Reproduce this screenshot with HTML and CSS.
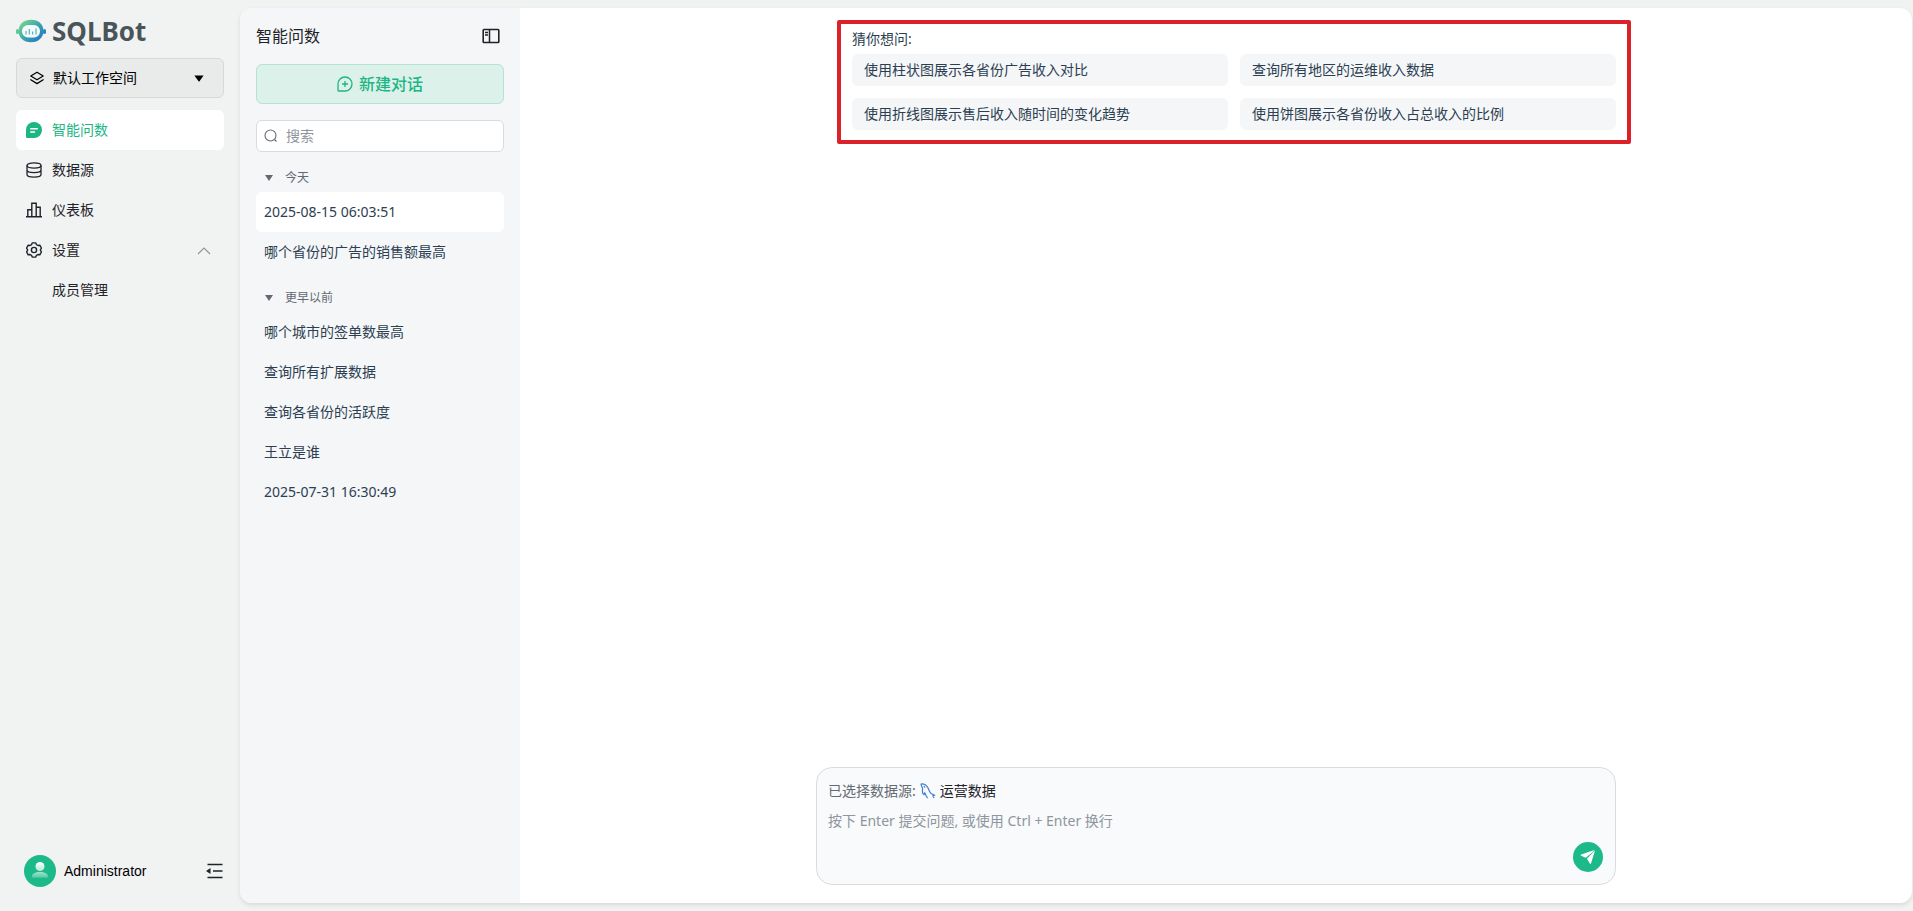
FILE: index.html
```html
<!DOCTYPE html>
<html lang="zh-CN">
<head>
<meta charset="utf-8">
<title>SQLBot</title>
<link rel="stylesheet" href="styles.css">
</head>
<body>
<div class="app">
  <aside class="sidebar">
    <div class="brand">
      <svg class="brand-logo" width="30" height="24" viewBox="0 0 30 24" aria-hidden="true">
        <defs>
          <linearGradient id="logo-fill" x1="0" y1="0" x2="1" y2="1">
            <stop offset="0.1" stop-color="#7ad391"/>
            <stop offset="0.5" stop-color="#3aa8a8"/>
            <stop offset="0.9" stop-color="#2878c4"/>
          </linearGradient>
        </defs>
        <rect x="0" y="10" width="3" height="5" rx="1.500" fill="#62c596"/>
        <rect x="27" y="10" width="3" height="5" rx="1.500" fill="#2e86bb"/>
        <path d="M15 .8c7.500 0 12.400 4.500 12.400 11.200S22.500 23.200 15 23.200 2.600 18.700 2.600 12 7.500.8 15 .8z" fill="url(#logo-fill)"/>
        <rect x="6" y="6" width="18" height="12.500" rx="6" fill="#f2fbfb"/>
        <path d="M10 12v3.500M13.300 10v5.500M16.600 12.500v3M20 9.500v6" stroke="#5fb0b8" stroke-width="1.200" fill="none"/>
      </svg>
      <span class="brand-name">SQLBot</span>
    </div>
    <button class="workspace" type="button">
      <svg width="16" height="16" viewBox="0 0 16 16" fill="none" stroke="currentColor" stroke-width="1.300" stroke-linejoin="round" stroke-linecap="round" aria-hidden="true">
        <path d="M8 2.200 14.200 6 8 9.800 1.800 6zM1.800 9.800 8 13.600l6.200-3.800"/>
      </svg>
      <span class="workspace-name">默认工作空间</span>
      <svg width="10" height="7" viewBox="0 0 10 7" aria-hidden="true"><path d="M.4.4h9.200L5.500 6.300q-.5.500-1 0z" fill="currentColor"/></svg>
    </button>
    <nav class="menu">
      <a class="menu-item active" href="#">
        <svg width="16" height="16" viewBox="0 0 16 16" aria-hidden="true">
          <path d="M8 0a8 8 0 1 1 0 16H1.200A1.200 1.200 0 0 1 0 14.800V8a8 8 0 0 1 8-8z" fill="#1cb584"/>
          <path d="M4.200 6.700h7.600M4.200 9.900h4.800" stroke="#fff" stroke-width="1.500"/>
        </svg>
        <span>智能问数</span>
      </a>
      <a class="menu-item" href="#">
        <svg width="16" height="16" viewBox="0 0 16 16" fill="none" stroke="currentColor" stroke-width="1.300" aria-hidden="true">
          <ellipse cx="8" cy="3.500" rx="7" ry="2.600"/>
          <path d="M1 3.500v9c0 1.500 3.100 2.600 7 2.600s7-1.100 7-2.600v-9M1 8c0 1.500 3.100 2.600 7 2.600S15 9.500 15 8"/>
        </svg>
        <span>数据源</span>
      </a>
      <a class="menu-item" href="#">
        <svg width="16" height="16" viewBox="0 0 16 16" fill="none" stroke="currentColor" stroke-width="1.400" aria-hidden="true">
          <path d="M0 14.700h16M1.800 14.700V7.700h4M5.800 14.700V1.200h4.400v13.500M10.200 5.300h4v9.400"/>
        </svg>
        <span>仪表板</span>
      </a>
      <a class="menu-item" href="#">
        <svg width="16" height="16" viewBox="0 0 16 16" fill="none" stroke="currentColor" stroke-width="1.400" stroke-linejoin="round" aria-hidden="true">
          <path d="M6.200.9h3.600l.7 1.800 1.400.8 1.900-.3 1.700 3-1.100 1.500v.6l1.100 1.500-1.700 3-1.900-.3-1.400.8-.7 1.800H6.200l-.7-1.800-1.400-.8-1.900.3-1.700-3 1.100-1.500v-.6L.5 6.200l1.700-3 1.900.3 1.400-.8z"/>
          <circle cx="8" cy="8" r="2.600"/>
        </svg>
        <span class="menu-label">设置</span>
        <svg width="14" height="10" viewBox="0 0 14 10" fill="none" stroke="#8f959e" stroke-width="1.200" aria-hidden="true"><path d="M1 9l6-6 6 6"/></svg>
      </a>
      <a class="menu-item sub" href="#">成员管理</a>
    </nav>
    <footer class="user">
      <svg width="32" height="32" viewBox="0 0 32 32" aria-hidden="true">
        <defs>
          <linearGradient id="body-fill" x1="0" y1="0" x2="0" y2="1">
            <stop offset="0" stop-color="#a4e4cf"/>
            <stop offset="1" stop-color="#4fc9a2"/>
          </linearGradient>
          <linearGradient id="head-fill" x1="0" y1="0" x2="0" y2="1">
            <stop offset="0" stop-color="#fff"/>
            <stop offset="1" stop-color="#b3e9d7"/>
          </linearGradient>
        </defs>
        <circle cx="16" cy="16" r="16" fill="#1cba8a"/>
        <path d="M8 21.500c0-3 3.500-4.500 8-4.500s8 1.500 8 4.500a1.300 1.300 0 0 1-1.300 1.300H9.300A1.300 1.300 0 0 1 8 21.500z" fill="url(#body-fill)"/>
        <circle cx="16" cy="11.500" r="4.500" fill="url(#head-fill)"/>
      </svg>
      <span class="user-name">Administrator</span>
      <button class="icon-button" type="button" aria-label="收起菜单">
        <svg width="18" height="16" viewBox="0 0 18 16" aria-hidden="true">
          <path d="M1.500 1.500h15M7 8h9.500M1.500 14.500h15" stroke="currentColor" stroke-width="1.600"/>
          <path d="M4.500 5v6L0 8z" fill="currentColor"/>
        </svg>
      </button>
    </footer>
  </aside>

  <div class="panel">
    <section class="history">
      <header class="history-head">
        <h1 class="history-title">智能问数</h1>
        <button class="icon-button" type="button" aria-label="收起会话列表">
          <svg width="18" height="16" viewBox="0 0 18 16" fill="none" stroke="currentColor" aria-hidden="true">
            <rect x="1.200" y="1.500" width="15.600" height="13" rx=".8" stroke-width="1.600"/>
            <path d="M7.500 1.500v13" stroke-width="1.500"/>
            <path d="M3 4.500h3M3 7h3" stroke-width="1.400"/>
          </svg>
        </button>
      </header>
      <button class="new-chat" type="button">
        <svg width="16" height="16" viewBox="0 0 16 16" fill="none" stroke="currentColor" stroke-width="1.300" aria-hidden="true">
          <path d="M8 1a7 7 0 1 1 0 14H1.500a.5.500 0 0 1-.5-.5V8a7 7 0 0 1 7-7zM8 5v6M5 8h6"/>
        </svg>
        <span>新建对话</span>
      </button>
      <label class="search">
        <svg width="14" height="14" viewBox="0 0 14 14" fill="none" stroke="#646a73" stroke-width="1.100" aria-hidden="true">
          <circle cx="6.500" cy="6.500" r="5.500"/><path d="M10.500 10.500l2 2"/>
        </svg>
        <input class="search-input" type="text" placeholder="搜索" aria-label="搜索">
      </label>
      <h2 class="group"><svg width="8" height="6" viewBox="0 0 8 6" aria-hidden="true"><path d="M0 0h8L4 6z" fill="currentColor"/></svg>今天</h2>
      <a class="chat active" href="#">2025-08-15 06:03:51</a>
      <a class="chat" href="#">哪个省份的广告的销售额最高</a>
      <h2 class="group"><svg width="8" height="6" viewBox="0 0 8 6" aria-hidden="true"><path d="M0 0h8L4 6z" fill="currentColor"/></svg>更早以前</h2>
      <a class="chat" href="#">哪个城市的签单数最高</a>
      <a class="chat" href="#">查询所有扩展数据</a>
      <a class="chat" href="#">查询各省份的活跃度</a>
      <a class="chat" href="#">王立是谁</a>
      <a class="chat" href="#">2025-07-31 16:30:49</a>
    </section>

    <main class="conversation">
      <section class="suggest">
        <p class="suggest-title">猜你想问:</p>
        <div class="suggest-grid">
          <button class="chip" type="button">使用柱状图展示各省份广告收入对比</button>
          <button class="chip" type="button">查询所有地区的运维收入数据</button>
          <button class="chip" type="button">使用折线图展示售后收入随时间的变化趋势</button>
          <button class="chip" type="button">使用饼图展示各省份收入占总收入的比例</button>
        </div>
      </section>
      <form class="composer">
        <div class="source">
          <span class="source-label">已选择数据源:</span>
          <svg width="16" height="16" viewBox="0 0 16 16" fill="none" stroke="#3f7fd0" stroke-width="1.200" stroke-linejoin="round" stroke-linecap="round" aria-hidden="true">
            <path d="M1 1c3-.3 5.300 1 6.800 3.500C9 6.800 9.300 9 11 10.500l3.700 1.700-1.900.6 1 1.700M1 1c.2 1.700 1 2.800 1.500 4 .2 1.800-.5 3.500.3 5.500l1.200 1.200.8-2 1.200 2.800 1.300 2.300"/>
            <path d="M4.200 3.500l.6.700"/>
          </svg>
          <span class="source-name">运营数据</span>
        </div>
        <textarea class="question" rows="3" aria-label="问题" placeholder="按下 Enter 提交问题, 或使用 Ctrl + Enter 换行"></textarea>
        <button class="send" type="submit" aria-label="发送">
          <svg width="16" height="16" viewBox="0 0 16 16" fill="#fff" aria-hidden="true">
            <path d="M14.500 1 1.200 5.500c-.6.200-.6.900-.1 1.200l4.700 2L12.500 3.200z"/>
            <path d="M15 1.500 11 14.500c-.2.600-.9.600-1.200.1L7 9.800 12.900 3.600z"/>
          </svg>
        </button>
      </form>
    </main>
  </div>
</div>
</body>
</html>
```
FILE: styles.css
```css
* {
  box-sizing: border-box;
}

body {
  margin: 0;
  background: #f1f3f3;
  color: #1f2329;
  font: 14px/22px "Noto Sans", "Noto Sans CJK SC", sans-serif;
}

button,
input,
textarea {
  font: inherit;
  color: inherit;
}

button {
  cursor: pointer;
}

a {
  color: inherit;
  text-decoration: none;
}

h1,
h2,
p {
  margin: 0;
  font-weight: 400;
}

svg {
  flex: none;
}

.app {
  display: flex;
  min-height: 100vh;
}

.sidebar {
  display: flex;
  flex-direction: column;
  flex: none;
  width: 240px;
  padding: 16px;
}

.brand {
  display: flex;
  align-items: center;
  gap: 6px;
  height: 30px;
}

.brand-name {
  color: #4a5559;
  font-size: 26px;
  font-weight: 700;
  line-height: 28px;
}

.workspace {
  display: flex;
  align-items: center;
  gap: 8px;
  height: 40px;
  margin-top: 12px;
  padding: 0 19px 0 12px;
  border: 1px solid #d6d9d9;
  border-radius: 6px;
  background: #e9ebeb;
  color: #000;
}

.workspace-name {
  flex: 1;
  text-align: left;
}

.menu {
  margin-top: 12px;
}

.menu-item {
  display: flex;
  align-items: center;
  gap: 10px;
  height: 40px;
  padding: 0 13px 0 10px;
  border-radius: 6px;
}

.menu-item.active {
  background: #fff;
  color: #1cb584;
}

.menu-item.sub {
  padding-left: 36px;
}

.menu-label {
  flex: 1;
}

.user {
  display: flex;
  align-items: center;
  gap: 8px;
  margin-top: auto;
  padding: 0 0 8px 8px;
}

.user-name {
  flex: 1;
  color: #000;
  font-family: "Liberation Sans", Arial, sans-serif;
}

.icon-button {
  display: flex;
  padding: 0;
  border: 0;
  background: none;
}

.panel {
  display: flex;
  flex: 1;
  margin: 8px 1px 8px 0;
  border-radius: 12px;
  background: #fff;
  box-shadow: 0 2px 4px rgba(31, 35, 41, 0.12);
}

.history {
  flex: none;
  width: 280px;
  padding: 16px;
  border-radius: 12px 0 0 12px;
  background: #f4f6f8;
  color: #2c3e50;
}

.history-head {
  display: flex;
  align-items: center;
  justify-content: space-between;
  height: 24px;
  padding-right: 4px;
  color: #1f2329;
}

.history-title {
  font-size: 16px;
  line-height: 24px;
}

.new-chat {
  display: flex;
  align-items: center;
  justify-content: center;
  gap: 6px;
  width: 100%;
  height: 40px;
  margin-top: 16px;
  border: 1px solid #b4e2d3;
  border-radius: 6px;
  background: #ddf1eb;
  color: #1cb584;
  font-size: 16px;
  font-weight: 500;
}

.search {
  display: flex;
  align-items: center;
  gap: 8px;
  height: 32px;
  margin-top: 16px;
  padding: 0 7px;
  border: 1px solid #d9dcdf;
  border-radius: 6px;
  background: #fff;
}

.search-input {
  flex: 1;
  min-width: 0;
  padding: 0;
  border: 0;
  outline: 0;
  background: none;
}

.search-input::placeholder,
.question::placeholder {
  color: #8f959e;
  opacity: 1;
}

.group {
  display: flex;
  align-items: center;
  gap: 12px;
  margin: 16px 0 4px;
  padding-left: 9px;
  color: #646a73;
  font-size: 12px;
  line-height: 20px;
}

.chat {
  display: flex;
  align-items: center;
  height: 40px;
  padding: 0 8px;
  border-radius: 6px;
}

.chat.active {
  background: #fff;
}

.conversation {
  display: flex;
  flex: 1;
  flex-direction: column;
  align-items: center;
  justify-content: space-between;
  padding: 20px 24px 18px;
}

.suggest {
  position: relative;
  width: 100%;
  max-width: 800px;
  padding-left: 36px;
  color: #2c3e50;
}

/* highlight frame around the suggestions */
.suggest::after {
  content: "";
  position: absolute;
  inset: -8px -15px -14px 21px;
  border: 4px solid #dc2229;
  border-radius: 2px;
  pointer-events: none;
}

.suggest-title {
  margin-bottom: 4px;
}

.suggest-grid {
  display: grid;
  grid-template-columns: 1fr 1fr;
  gap: 12px;
}

.chip {
  height: 32px;
  padding: 0 12px;
  border: 0;
  border-radius: 6px;
  background: #f4f6f8;
  text-align: left;
}

.composer {
  position: relative;
  width: 100%;
  max-width: 800px;
  padding: 12px 11px;
  border: 1px solid #d9dcdf;
  border-radius: 16px;
  background: #f8fafb;
}

.source {
  display: flex;
  align-items: center;
  gap: 4px;
}

.source-label {
  color: #646a73;
}

.source-name {
  color: #1f2329;
}

.question {
  display: block;
  width: 100%;
  height: 62px;
  margin-top: 8px;
  padding: 0;
  border: 0;
  outline: 0;
  background: none;
  resize: none;
}

.send {
  position: absolute;
  right: 12px;
  bottom: 12px;
  display: flex;
  align-items: center;
  justify-content: center;
  width: 30px;
  height: 30px;
  padding: 0;
  border: 0;
  border-radius: 50%;
  background: #1cba8a;
}
```
